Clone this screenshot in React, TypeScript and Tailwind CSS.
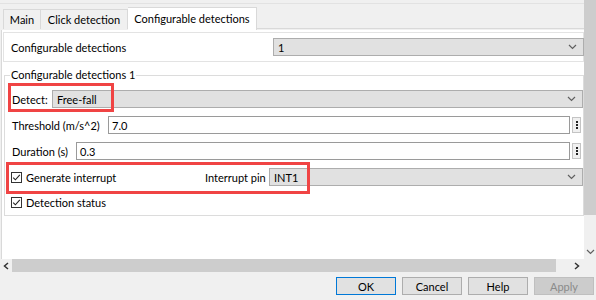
import React from "react";

const Chevron: React.FC = () => (
  <svg width="9" height="6" viewBox="0 0 9 6" className="shrink-0">
    <polyline points="1,1 4.5,4.5 8,1" fill="none" stroke="#606060" strokeWidth="1.2" />
  </svg>
);

type SelectProps = {
  value: string;
  className?: string;
};

const Select: React.FC<SelectProps> = ({ value, className = "" }) => (
  <div
    className={`h-[18px] flex items-center justify-between bg-[#e1e1e1] border border-[#adadad] pl-[4px] pr-[6px] ${className}`}
  >
    <span>{value}</span>
    <Chevron />
  </div>
);

const DotsButton: React.FC = () => (
  <div className="w-[9px] h-[16px] ml-[2px] bg-[#f0f0f0] border border-[#c4c4c4] flex flex-col items-center justify-center gap-[1px]">
    <div className="w-[2px] h-[2px] bg-[#222]" />
    <div className="w-[2px] h-[2px] bg-[#222]" />
    <div className="w-[2px] h-[2px] bg-[#222]" />
  </div>
);

const TextInput: React.FC<{ value: string }> = ({ value }) => (
  <div className="flex-1 h-[18px] bg-white border border-[#9a9a9a] flex items-center pl-[3px]">
    {value}
  </div>
);

const Checkbox: React.FC = () => (
  <div className="w-[11px] h-[11px] border border-[#333] bg-white flex items-center justify-center shrink-0">
    <svg width="9" height="9" viewBox="0 0 9 9">
      <polyline points="1.2,4.6 3.4,6.8 7.8,1.8" fill="none" stroke="#222" strokeWidth="1.1" />
    </svg>
  </div>
);

const Button: React.FC<{ label: string; primary?: boolean; disabled?: boolean }> = ({
  label,
  primary,
  disabled,
}) => (
  <div
    className={`w-[60px] h-[18px] flex items-center justify-center border ${
      primary
        ? "border-[#0078d7] bg-[#e1e1e1] text-black"
        : disabled
        ? "border-[#bfbfbf] bg-[#cccccc] text-[#8a8a8a]"
        : "border-[#adadad] bg-[#e1e1e1] text-black"
    }`}
  >
    {label}
  </div>
);

export default function App() {
  return (
    <div className="w-[596px] h-[300px] bg-[#f0f0f0] flex flex-col overflow-hidden text-[11px] leading-none whitespace-nowrap text-black font-['Lato',sans-serif]">
      <div className="flex h-[259px]">
        <div className="flex-1 flex flex-col">
          <div className="h-[4px] border-b border-[#e2e2e2]" />

          {/* tabs */}
          <div className="h-[26px] flex items-end pl-[3px]">
            <div className="w-[38px] h-[20px] mb-[1px] flex items-center justify-center border border-[#d9d9d9] border-b-0 bg-[#f0f0f0]">
              Main
            </div>
            <div className="w-[87px] h-[20px] mb-[1px] flex items-center justify-center border border-[#d9d9d9] border-l-0 border-b-0 bg-[#f0f0f0]">
              Click detection
            </div>
            <div className="w-[129px] h-[23px] pb-[2px] flex items-center justify-center border border-[#d9d9d9] border-l-0 border-b-0 bg-white">
              Configurable detections
            </div>
            <div className="flex-1 h-[1px] mb-[1px] bg-[#d9d9d9]" />
          </div>

          {/* panel */}
          <div className="relative flex-1 bg-white border-l border-[#d9d9d9] ml-[1px] pl-[1px] pt-[2px]">
            <div className="h-[30px] flex items-center justify-between border border-[#e3e3e3] pl-[7px]">
              <span>Configurable detections</span>
              <Select value="1" className="w-[311px] -mr-[1px]" />
            </div>

            <div className="relative mt-[13px] ml-[1px] h-[141px] border border-[#dcdcdc] pl-[7px] pt-[10px] flex flex-col">
              <span className="absolute -top-[7px] left-[5px] bg-white px-[1px]">
                Configurable detections 1
              </span>

              <div className="h-[26px] flex items-center">
                <span className="w-[40px]">Detect:</span>
                <Select value="Free-fall" className="flex-1" />
              </div>

              <div className="h-[26px] flex items-center pr-[2px]">
                <span className="w-[96px]">Threshold (m/s^2)</span>
                <TextInput value="7.0" />
                <DotsButton />
              </div>

              <div className="h-[26px] flex items-center pr-[2px]">
                <span className="w-[64px]">Duration (s)</span>
                <TextInput value="0.3" />
                <DotsButton />
              </div>

              <div className="h-[26px] flex items-center">
                <div className="-ml-[1px] flex items-center w-[194px]">
                  <Checkbox />
                  <span className="ml-[4px]">Generate interrupt</span>
                </div>
                <span className="w-[64px]">Interrupt pin</span>
                <Select value="INT1" className="flex-1" />
              </div>

              <div className="h-[24px] flex items-center -ml-[1px]">
                <Checkbox />
                <span className="ml-[4px]">Detection status</span>
              </div>
            </div>

            {/* annotation boxes */}
            <div className="absolute left-[6px] top-[53px] w-[106px] h-[29px] border-[3px] border-[#f04444]" />
            <div className="absolute left-[4px] top-[132px] w-[304px] h-[32px] border-[3px] border-[#f04444]" />
          </div>
        </div>

        {/* vertical scrollbar */}
        <div className="w-[12px] flex flex-col">
          <div className="h-[215px] bg-[#cdcdcd]" />
          <div className="flex-1 flex items-end justify-center pb-[4px]">
            <Chevron />
          </div>
        </div>
      </div>

      {/* horizontal scrollbar */}
      <div className="h-[13px] flex">
        <div className="w-[12px] flex items-center justify-center">
          <svg width="6" height="8" viewBox="0 0 6 8">
            <polyline points="5,1 1.5,4 5,7" fill="none" stroke="#333" strokeWidth="1.5" />
          </svg>
        </div>
        <div className="w-[544px] bg-[#cdcdcd]" />
        <div className="flex-1 flex items-center justify-end pr-[4px]">
          <svg width="6" height="8" viewBox="0 0 6 8">
            <polyline points="1,1 4.5,4 1,7" fill="none" stroke="#333" strokeWidth="1.5" />
          </svg>
        </div>
        <div className="w-[12px]" />
      </div>

      {/* buttons */}
      <div className="flex-1 flex items-center justify-end gap-[6px] pr-[2px]">
        <Button label="OK" primary />
        <Button label="Cancel" />
        <Button label="Help" />
        <Button label="Apply" disabled />
      </div>
    </div>
  );
}
